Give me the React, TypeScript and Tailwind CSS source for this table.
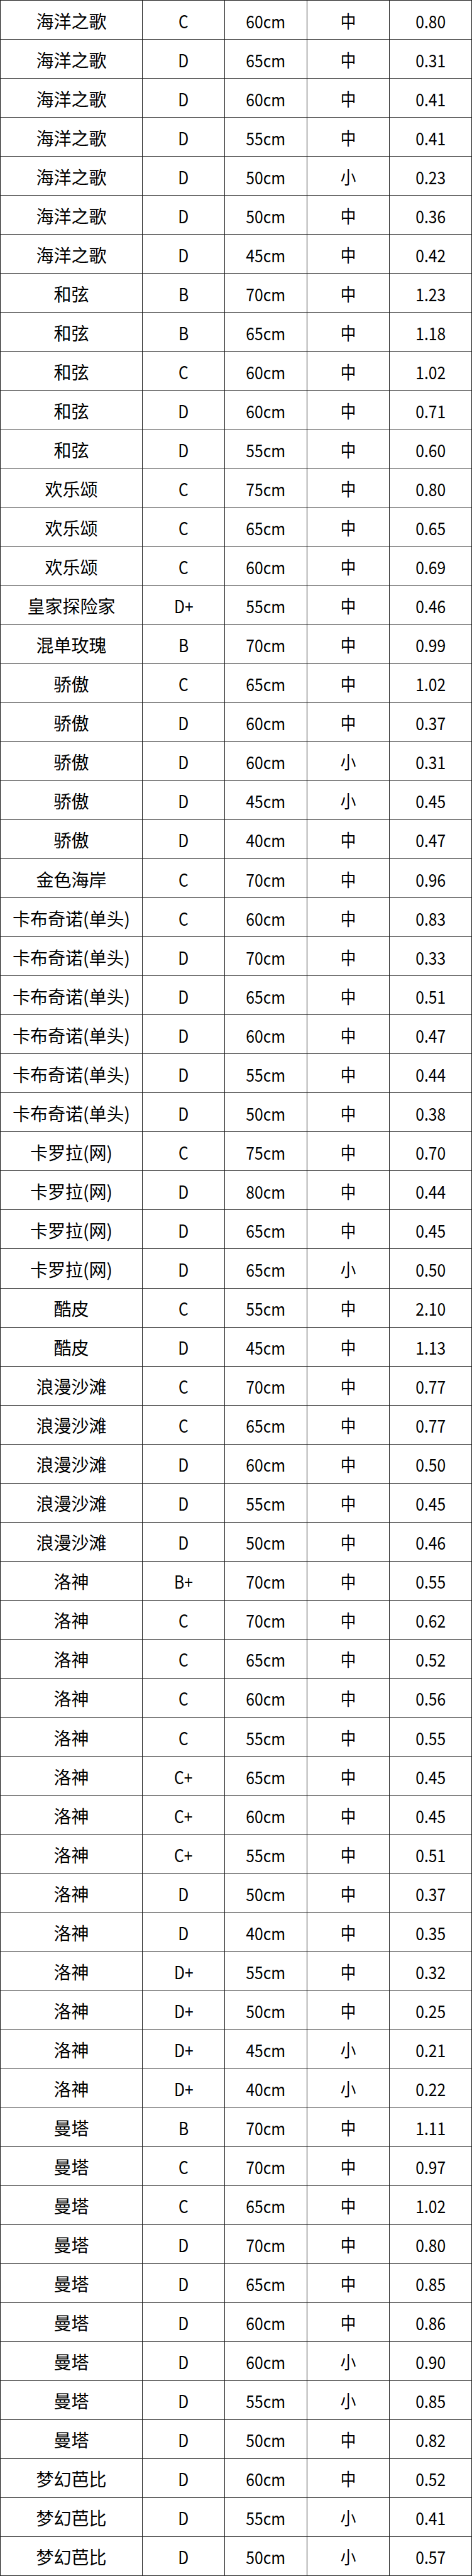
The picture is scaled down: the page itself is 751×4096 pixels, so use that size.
import React from 'react';

type Row = [string, string, string, string, string];

const rows: Row[] = [
  ['海洋之歌', 'C', '60cm', '中', '0.80'],
  ['海洋之歌', 'D', '65cm', '中', '0.31'],
  ['海洋之歌', 'D', '60cm', '中', '0.41'],
  ['海洋之歌', 'D', '55cm', '中', '0.41'],
  ['海洋之歌', 'D', '50cm', '小', '0.23'],
  ['海洋之歌', 'D', '50cm', '中', '0.36'],
  ['海洋之歌', 'D', '45cm', '中', '0.42'],
  ['和弦', 'B', '70cm', '中', '1.23'],
  ['和弦', 'B', '65cm', '中', '1.18'],
  ['和弦', 'C', '60cm', '中', '1.02'],
  ['和弦', 'D', '60cm', '中', '0.71'],
  ['和弦', 'D', '55cm', '中', '0.60'],
  ['欢乐颂', 'C', '75cm', '中', '0.80'],
  ['欢乐颂', 'C', '65cm', '中', '0.65'],
  ['欢乐颂', 'C', '60cm', '中', '0.69'],
  ['皇家探险家', 'D+', '55cm', '中', '0.46'],
  ['混单玫瑰', 'B', '70cm', '中', '0.99'],
  ['骄傲', 'C', '65cm', '中', '1.02'],
  ['骄傲', 'D', '60cm', '中', '0.37'],
  ['骄傲', 'D', '60cm', '小', '0.31'],
  ['骄傲', 'D', '45cm', '小', '0.45'],
  ['骄傲', 'D', '40cm', '中', '0.47'],
  ['金色海岸', 'C', '70cm', '中', '0.96'],
  ['卡布奇诺(单头)', 'C', '60cm', '中', '0.83'],
  ['卡布奇诺(单头)', 'D', '70cm', '中', '0.33'],
  ['卡布奇诺(单头)', 'D', '65cm', '中', '0.51'],
  ['卡布奇诺(单头)', 'D', '60cm', '中', '0.47'],
  ['卡布奇诺(单头)', 'D', '55cm', '中', '0.44'],
  ['卡布奇诺(单头)', 'D', '50cm', '中', '0.38'],
  ['卡罗拉(网)', 'C', '75cm', '中', '0.70'],
  ['卡罗拉(网)', 'D', '80cm', '中', '0.44'],
  ['卡罗拉(网)', 'D', '65cm', '中', '0.45'],
  ['卡罗拉(网)', 'D', '65cm', '小', '0.50'],
  ['酷皮', 'C', '55cm', '中', '2.10'],
  ['酷皮', 'D', '45cm', '中', '1.13'],
  ['浪漫沙滩', 'C', '70cm', '中', '0.77'],
  ['浪漫沙滩', 'C', '65cm', '中', '0.77'],
  ['浪漫沙滩', 'D', '60cm', '中', '0.50'],
  ['浪漫沙滩', 'D', '55cm', '中', '0.45'],
  ['浪漫沙滩', 'D', '50cm', '中', '0.46'],
  ['洛神', 'B+', '70cm', '中', '0.55'],
  ['洛神', 'C', '70cm', '中', '0.62'],
  ['洛神', 'C', '65cm', '中', '0.52'],
  ['洛神', 'C', '60cm', '中', '0.56'],
  ['洛神', 'C', '55cm', '中', '0.55'],
  ['洛神', 'C+', '65cm', '中', '0.45'],
  ['洛神', 'C+', '60cm', '中', '0.45'],
  ['洛神', 'C+', '55cm', '中', '0.51'],
  ['洛神', 'D', '50cm', '中', '0.37'],
  ['洛神', 'D', '40cm', '中', '0.35'],
  ['洛神', 'D+', '55cm', '中', '0.32'],
  ['洛神', 'D+', '50cm', '中', '0.25'],
  ['洛神', 'D+', '45cm', '小', '0.21'],
  ['洛神', 'D+', '40cm', '小', '0.22'],
  ['曼塔', 'B', '70cm', '中', '1.11'],
  ['曼塔', 'C', '70cm', '中', '0.97'],
  ['曼塔', 'C', '65cm', '中', '1.02'],
  ['曼塔', 'D', '70cm', '中', '0.80'],
  ['曼塔', 'D', '65cm', '中', '0.85'],
  ['曼塔', 'D', '60cm', '中', '0.86'],
  ['曼塔', 'D', '60cm', '小', '0.90'],
  ['曼塔', 'D', '55cm', '小', '0.85'],
  ['曼塔', 'D', '50cm', '中', '0.82'],
  ['梦幻芭比', 'D', '60cm', '中', '0.52'],
  ['梦幻芭比', 'D', '55cm', '小', '0.41'],
  ['梦幻芭比', 'D', '50cm', '小', '0.57'],
];

const App: React.FC = () => {
  return (
    <div className="w-[751px] h-[4096px] bg-white font-['Noto_Sans_CJK_SC',sans-serif] text-black text-[28px] leading-none">
      <div className="grid h-full grid-cols-[226px_1fr_1fr_1fr_1fr] grid-rows-66 border-t border-l-[1.5px] border-[#1f1f1f]">
        {rows.map((row, i) =>
          row.map((cell, j) => (
            <div
              key={`${i}-${j}`}
              className="flex items-center justify-center pt-[2px] border-r-[1.5px] border-b-[1.5px] border-[#1f1f1f] whitespace-nowrap"
            >
              {j === 0 ? cell : <span className="inline-block scale-x-[0.88]">{cell}</span>}
            </div>
          ))
        )}
      </div>
    </div>
  );
};

export default App;
